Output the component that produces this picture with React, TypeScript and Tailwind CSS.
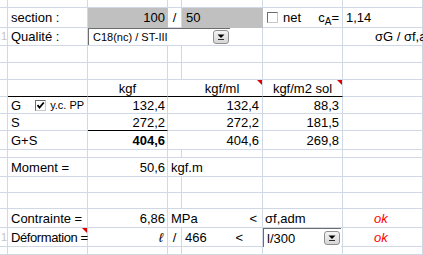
import React from 'react';

const grid = 'border-r border-b border-[#d0d7e5]';

const Cell = ({ w, className = '', children }: { w: string; className?: string; children?: React.ReactNode }) => (
  <div className={`${w} shrink-0 flex items-center whitespace-nowrap relative ${className}`}>{children}</div>
);

const RedMark = () => (
  <span className="absolute top-0 right-0 w-0 h-0 border-t-[5px] border-l-[5px] border-t-[#e00000] border-l-transparent" />
);

const Check = ({ checked }: { checked?: boolean }) => (
  <span className="w-[11px] h-[11px] bg-white border border-t-[#6b6b6b] border-l-[#6b6b6b] border-r-[#c8c8c8] border-b-[#c8c8c8] flex items-center justify-center shrink-0">
    {checked && (
      <svg width="9" height="9" viewBox="0 0 9 9">
        <path d="M1.5 4.2 L3.5 6.5 L7.8 1.5" stroke="#000" strokeWidth="1.8" fill="none" />
      </svg>
    )}
  </span>
);

const DropButton = () => (
  <span className="w-[16px] h-[14px] rounded-[3px] border border-[#8e8f8f] bg-gradient-to-b from-[#f4f4f4] to-[#d6d6d6] flex items-center justify-center">
    <svg width="8" height="6" viewBox="0 0 8 6">
      <path d="M0.5 0.5 H7.5 L4 4 Z" fill="#000" />
      <path d="M1 5.5 H7" stroke="#000" strokeWidth="0.8" />
    </svg>
  </span>
);

const W0 = 'w-[8px]';
const W1 = 'w-[80px]';
const W2 = 'w-[80px]';
const W3 = 'w-[14px]';
const W4 = 'w-[81px]';
const W5 = 'w-[80px]';
const W6 = 'w-[80px]';

const Blank = ({ h }: { h: string }) => (
  <div className={`flex ${h}`}>
    <Cell w={W0} className={grid} />
    <Cell w={W1} className={grid} />
    <Cell w={W2} className={grid} />
    <Cell w={W3} className={grid} />
    <Cell w={W4} className={grid} />
    <Cell w={W5} className={grid} />
    <Cell w={W6} className={grid} />
  </div>
);

const RowHead = ({ n }: { n?: string }) => (
  <Cell w={W0} className={`${grid} justify-end overflow-hidden text-[11px] text-[#c4c4c4]`}>{n}</Cell>
);

export default function App() {
  return (
    <div className="w-[423px] h-[255px] overflow-hidden bg-white text-black text-[13px] font-['Liberation_Sans',Arial,sans-serif] leading-none">
      <Blank h="h-[8px]" />

      {/* section */}
      <div className="flex h-[20px]">
        <RowHead />
        <Cell w={W1} className={`${grid} pl-[3px]`}>section :</Cell>
        <Cell w={W2} className="bg-[#c0c0c0] border-b border-[#c0c0c0] justify-end pr-[3px]">100</Cell>
        <Cell w={W3} className={`${grid} justify-center`}>/</Cell>
        <Cell w={W4} className="bg-[#c0c0c0] border-b border-[#c0c0c0] pl-[4px]">50</Cell>
        <Cell w={W5} className={`${grid} pl-[4px] gap-[5px]`}>
          <Check />
          <span>net</span>
          <span className="ml-auto pr-[3px] flex items-baseline">
            c<span className="text-[10px] relative top-[3px]">A</span>=
          </span>
        </Cell>
        <Cell w={W6} className={`${grid} pl-[3px]`}>1,14</Cell>
      </div>

      {/* qualité */}
      <div className="flex h-[18px] relative">
        <RowHead n="1" />
        <Cell w={W1} className={`${grid} pl-[3px]`}>Qualité :</Cell>
        <Cell w={W2} className={grid} />
        <Cell w={W3} className={grid} />
        <Cell w={W4} className={grid} />
        <Cell w={W5} className={grid} />
        <Cell w={W6} className={`${grid} pl-[32px] overflow-visible`}>σG / σf,adm</Cell>
        <div className="absolute left-[88px] top-0 w-[142px] h-[17px] bg-white border-l border-t border-[#6d6d6d] flex items-center pl-[4px] pr-[1px] text-[11px]">
          <span>C18(nc) / ST-III</span>
          <span className="ml-auto"><DropButton /></span>
        </div>
      </div>

      <Blank h="h-[17px]" />
      <Blank h="h-[17px]" />

      {/* header */}
      <div className="flex h-[17px]">
        <RowHead />
        <Cell w={W1} className="border-r border-b border-[#d0d7e5] border-b-black" />
        <Cell w={W2} className="border-r border-b border-[#d0d7e5] border-b-black justify-center">kgf</Cell>
        <Cell w={W3} className="border-b border-b-black" />
        <Cell w={W4} className="border-r border-b border-[#d0d7e5] border-b-black justify-center">
          kgf/ml
          <RedMark />
        </Cell>
        <Cell w={W5} className="border-r border-b border-[#d0d7e5] border-b-black justify-center">
          kgf/m2 sol
          <RedMark />
        </Cell>
        <Cell w={W6} className={grid} />
      </div>

      {/* G */}
      <div className="flex h-[17px]">
        <RowHead />
        <Cell w={W1} className={`${grid} pl-[3px]`}>
          <span>G</span>
          <span className="ml-[14px]"><Check checked /></span>
          <span className="ml-[4px] text-[11px]">y.c. PP</span>
        </Cell>
        <Cell w={W2} className={`${grid} justify-end pr-[2px]`}>132,4</Cell>
        <Cell w={W3} className="border-b border-[#d0d7e5]" />
        <Cell w={W4} className={`${grid} justify-end pr-[3px]`}>132,4</Cell>
        <Cell w={W5} className={`${grid} justify-end pr-[3px]`}>88,3</Cell>
        <Cell w={W6} className={grid} />
      </div>

      {/* S */}
      <div className="flex h-[17px]">
        <RowHead />
        <Cell w={W1} className={`${grid} pl-[3px]`}>S</Cell>
        <Cell w={W2} className="border-r border-b border-[#d0d7e5] border-b-black justify-end pr-[2px]">272,2</Cell>
        <Cell w={W3} className="border-b border-[#d0d7e5]" />
        <Cell w={W4} className={`${grid} justify-end pr-[3px]`}>272,2</Cell>
        <Cell w={W5} className={`${grid} justify-end pr-[3px]`}>181,5</Cell>
        <Cell w={W6} className={grid} />
      </div>

      {/* G+S */}
      <div className="flex h-[19px]">
        <RowHead />
        <Cell w={W1} className={`${grid} pl-[3px]`}>G+S</Cell>
        <Cell w={W2} className={`${grid} justify-end pr-[2px] font-bold`}>404,6</Cell>
        <Cell w={W3} className="border-b border-[#d0d7e5]" />
        <Cell w={W4} className={`${grid} justify-end pr-[3px]`}>404,6</Cell>
        <Cell w={W5} className={`${grid} justify-end pr-[3px]`}>269,8</Cell>
        <Cell w={W6} className={grid} />
      </div>

      <Blank h="h-[8px]" />

      {/* moment */}
      <div className="flex h-[19px]">
        <RowHead />
        <Cell w={W1} className={`${grid} pl-[3px]`}>Moment =</Cell>
        <Cell w={W2} className={`${grid} justify-end pr-[2px]`}>50,6</Cell>
        <Cell w={W3} className="border-b border-[#d0d7e5] pl-[3px] overflow-visible z-10">kgf.m</Cell>
        <Cell w={W4} className={grid} />
        <Cell w={W5} className={grid} />
        <Cell w={W6} className={grid} />
      </div>

      <Blank h="h-[16px]" />
      <Blank h="h-[16px]" />

      {/* contrainte */}
      <div className="flex h-[19px]">
        <RowHead />
        <Cell w={W1} className={`${grid} pl-[3px]`}>Contrainte =</Cell>
        <Cell w={W2} className={`${grid} justify-end pr-[2px]`}>6,86</Cell>
        <Cell w={W3} className="border-b border-[#d0d7e5] pl-[3px] overflow-visible z-10">MPa</Cell>
        <Cell w={W4} className={`${grid} justify-end pr-[5px]`}>&lt;</Cell>
        <Cell w={W5} className={`${grid} pl-[2px]`}>σf,adm</Cell>
        <Cell w={W6} className={`${grid} pl-[31px] italic text-[#ff0000]`}>ok</Cell>
      </div>

      {/* deformation */}
      <div className="flex h-[19px] relative">
        <RowHead n="1" />
        <Cell w={W1} className={`${grid} pl-[3px] tracking-[-0.4px]`}>
          Déformation =
          <RedMark />
        </Cell>
        <Cell w={W2} className={`${grid} justify-end pr-[4px] italic`}>ℓ</Cell>
        <Cell w={W3} className={`${grid} justify-center`}>/</Cell>
        <Cell w={W4} className={`${grid} pl-[3px]`}>
          466
          <span className="ml-auto pr-[19px]">&lt;</span>
        </Cell>
        <Cell w={W5} className={grid} />
        <Cell w={W6} className={`${grid} pl-[31px] italic text-[#ff0000]`}>ok</Cell>
        <div className="absolute left-[263px] top-0 w-[78px] h-[19px] bg-white border-l border-t border-[#6d6d6d] flex items-center pl-[3px] pr-[1px]">
          <span>l/300</span>
          <span className="ml-auto"><DropButton /></span>
        </div>
      </div>

      <Blank h="h-[8px]" />
    </div>
  );
}
